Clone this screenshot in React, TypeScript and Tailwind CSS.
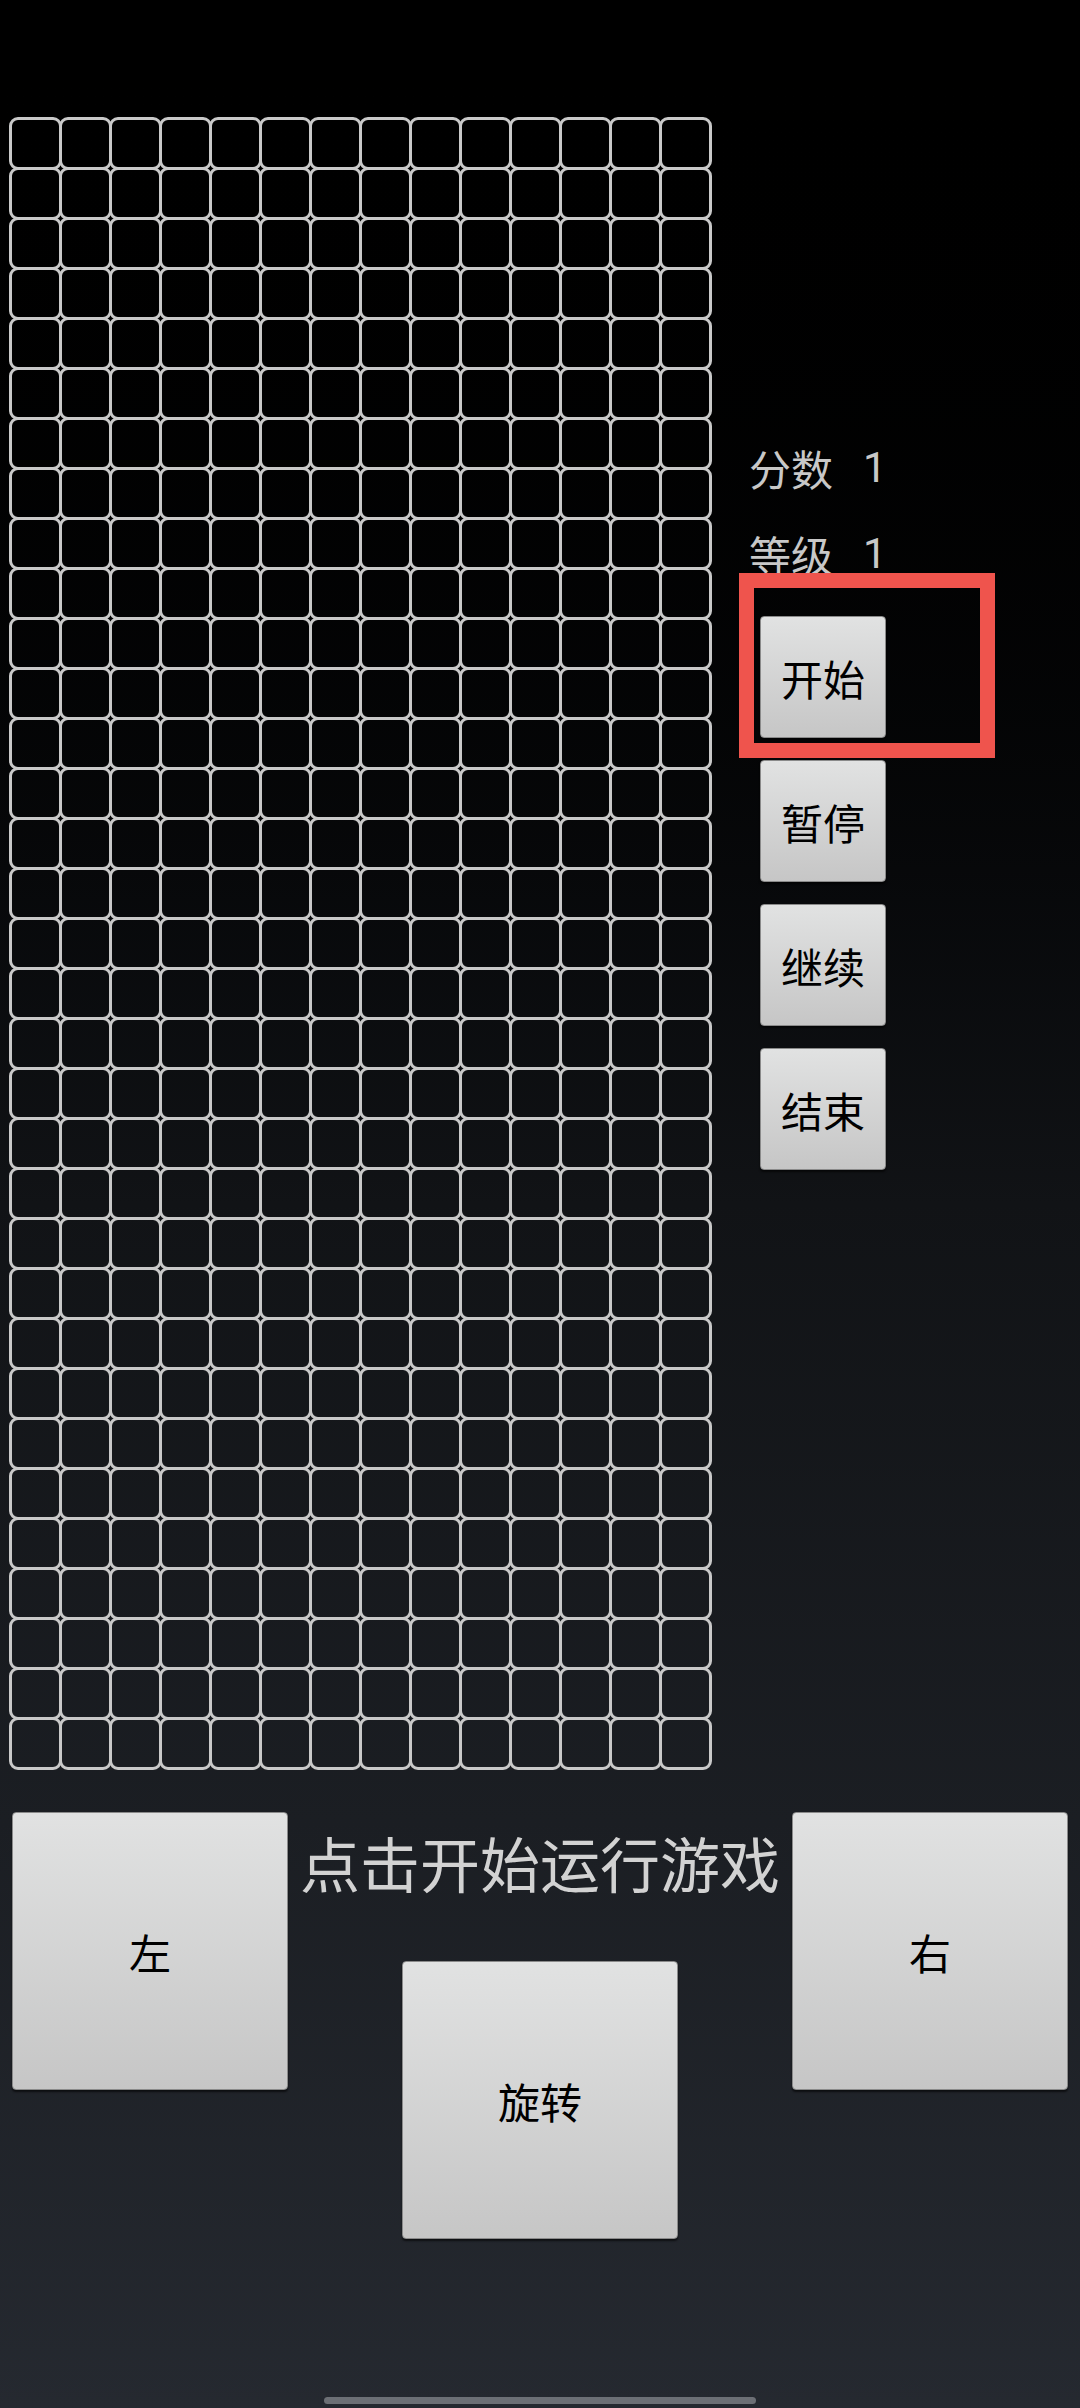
import React from "react";

const COLS = 14;
const ROWS = 33;

const font = { fontFamily: '"Noto Sans CJK SC", Roboto, sans-serif' };

function GameButton({ label, size }: { label: string; size: "small" | "big" }) {
  const dims = size === "small" ? "w-[126px] h-[122px]" : "w-[276px] h-[278px]";
  return (
    <button
      className={`${dims} flex items-center justify-center rounded-[4px] bg-gradient-to-b from-[#e1e2e2] to-[#c6c6c6] text-[42px] text-black border border-[#8a8a8a] shadow-[0_2px_2px_rgba(0,0,0,0.6)]`}
    >
      {label}
    </button>
  );
}

export default function App() {
  const cells = Array.from({ length: COLS * ROWS });

  return (
    <div
      className="relative w-[1080px] h-[2408px] overflow-hidden bg-gradient-to-b from-[#000000] via-[#111316] to-[#252930]"
      style={font}
    >
      {/* Top: board + side panel */}
      <div className="flex">
        <div className="pl-[10px] pt-[118px]">
          <div className="grid grid-cols-[repeat(14,50px)] grid-rows-[repeat(33,50px)]">
            {cells.map((_, i) => (
              <div
                key={i}
                className="w-[53px] h-[53px] -m-[1.5px] border-[3px] border-[#c9c9c9] rounded-[9px]"
              />
            ))}
          </div>
        </div>

        <div className="ml-[39px] pt-[440px] flex flex-col text-[#c8c8c8] text-[42px]">
          <div className="flex leading-[56px]">
            <span>分数</span>
            <span className="ml-[30px]" style={{ fontFamily: "Roboto, sans-serif" }}>1</span>
          </div>
          <div className="flex leading-[56px] mt-[30px]">
            <span>等级</span>
            <span className="ml-[30px]" style={{ fontFamily: "Roboto, sans-serif" }}>1</span>
          </div>
          <div className="mt-[34px] ml-[11px] flex flex-col gap-[22px]">
            <GameButton label="开始" size="small" />
            <GameButton label="暂停" size="small" />
            <GameButton label="继续" size="small" />
            <GameButton label="结束" size="small" />
          </div>
        </div>
      </div>

      {/* Bottom controls */}
      <div className="flex mt-[44px] px-[12px]">
        <GameButton label="左" size="big" />
        <div className="flex-1 flex flex-col items-center">
          <div className="mt-[15px] text-[60px] leading-[70px] text-[#d2d2d2] whitespace-nowrap">
            点击开始运行游戏
          </div>
          <div className="mt-[64px]">
            <GameButton label="旋转" size="big" />
          </div>
        </div>
        <GameButton label="右" size="big" />
      </div>

      {/* highlight annotation */}
      <div className="absolute left-[739px] top-[573px] w-[256px] h-[185px] border-[15px] border-[#ef544d]" />

      {/* home indicator */}
      <div className="absolute left-[324px] top-[2397px] w-[432px] h-[7px] rounded-full bg-[#6c6f75]" />
    </div>
  );
}
